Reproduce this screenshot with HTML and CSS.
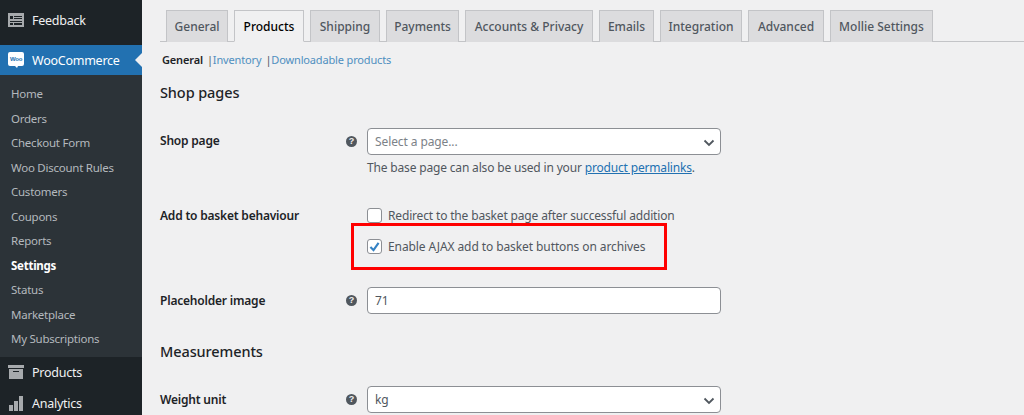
FILE: index.html
```html
<!DOCTYPE html>
<html lang="en">
<head>
<meta charset="utf-8">
<title>WooCommerce settings</title>
<link rel="stylesheet" href="styles.css">
</head>
<body>
<div class="page">
  <aside class="sidebar">
    <div class="menu-top feedback">
      <svg class="mi" viewBox="0 0 16 16"><path fill="#a7aaad" d="M0 1h16v14H0z"/><path fill="#1d2327" d="M2 4h3v3H2zM6 4h8v1H6zM6 6h8v1H6zM2 9h12v1H2zM2 11h3v2H2zM6 11h8v2H6z"/></svg>
      <span>Feedback</span>
    </div>
    <div class="menu-top woo">
      <svg class="mi" viewBox="0 0 16 16"><path fill="#fff" d="M2 0h12a2 2 0 0 1 2 2v10a2 2 0 0 1-2 2h-4l-1 2-2-2H2a2 2 0 0 1-2-2V2a2 2 0 0 1 2-2z"/><text x="8" y="9.4" class="woo-t">Woo</text></svg>
      <span>WooCommerce</span>
      <i class="arrow"></i>
    </div>
    <ul class="submenu">
      <li>Home</li><li>Orders</li><li>Checkout Form</li><li>Woo Discount Rules</li><li>Customers</li><li>Coupons</li><li>Reports</li><li class="cur">Settings</li><li>Status</li><li>Marketplace</li><li>My Subscriptions</li>
    </ul>
    <div class="menu-top products">
      <svg class="mi" viewBox="0 0 16 16"><path fill="#a7aaad" d="M0 1h16v3H0zM1 5h14v10H1z"/><path fill="#1d2327" d="M5 7h6v1H5z"/></svg>
      <span>Products</span>
    </div>
    <div class="menu-top analytics">
      <svg class="mi" viewBox="0 0 16 16"><path fill="#a7aaad" d="M1 10h4v6H1zM6 6h4v10H6zM11 1h4v15h-4z"/></svg>
      <span>Analytics</span>
    </div>
  </aside>
  <main class="main">
    <nav class="tabs">
      <a class="tab">General</a><a class="tab active">Products</a><a class="tab">Shipping</a><a class="tab">Payments</a><a class="tab">Accounts &amp; Privacy</a><a class="tab">Emails</a><a class="tab">Integration</a><a class="tab">Advanced</a><a class="tab">Mollie Settings</a>
    </nav>
    <div class="subnav"><b>General</b><span class="sep">|</span><a>Inventory</a><span class="sep">|</span><a>Downloadable products</a></div>
    <h2 class="h-shop">Shop pages</h2>
    <div class="row r-shop">
      <label class="lbl">Shop page</label>
      <span class="help">?</span>
      <div class="field">
        <div class="input select muted">Select a page...<svg class="chev" viewBox="0 0 12 8"><path d="M1.5 1.5 6 6l4.5-4.5" fill="none" stroke="#50575e" stroke-width="1.8"/></svg></div>
        <p class="desc">The base page can also be used in your <a>product permalinks</a>.</p>
      </div>
    </div>
    <div class="row r-basket">
      <label class="lbl">Add to basket behaviour</label>
      <span class="help none"></span>
      <div class="field">
        <div class="check"><span class="box"></span>Redirect to the basket page after successful addition</div>
        <div class="check second"><span class="box"><svg viewBox="0 0 16 16"><path d="M3 8.5 6.8 12.5 13 3.5" fill="none" stroke="#3582c4" stroke-width="2.6"/></svg></span>Enable AJAX add to basket buttons on archives</div>
        <div class="highlight"></div>
      </div>
    </div>
    <div class="row r-place">
      <label class="lbl">Placeholder image</label>
      <span class="help">?</span>
      <div class="field"><div class="input">71</div></div>
    </div>
    <h2 class="h-meas">Measurements</h2>
    <div class="row r-weight">
      <label class="lbl">Weight unit</label>
      <span class="help">?</span>
      <div class="field"><div class="input select">kg<svg class="chev" viewBox="0 0 12 8"><path d="M1.5 1.5 6 6l4.5-4.5" fill="none" stroke="#50575e" stroke-width="1.8"/></svg></div></div>
    </div>
  </main>
</div>
</body>
</html>
```
FILE: styles.css
```css
* { box-sizing: border-box; }
html, body { margin: 0; height: 415px; overflow: hidden; }
body { background: #f0f0f1; font-family: "Noto Sans", "Open Sans", sans-serif; font-size: 12px; letter-spacing: -0.2px; color: #3c434a; }
.page { display: flex; height: 415px; }
.sidebar { width: 142px; flex: none; background: #1d2327; height: 415px; overflow: hidden; }
.menu-top { display: flex; align-items: center; gap: 8px; padding-left: 8px; height: 30px; color: #f0f0f1; font-size: 12.5px; letter-spacing: -0.25px; position: relative; }
.mi { width: 16px; height: 16px; flex: none; }
.feedback { margin-top: 5px; margin-bottom: 10px; }
.woo { background: #2271b1; color: #fff; }
.woo-t { font: bold 6px "Liberation Sans", sans-serif; fill: #2271b1; text-anchor: middle; }
.arrow { position: absolute; right: 0; top: 8px; border: 7px solid transparent; border-right-color: #f0f0f1; border-left-width: 0; }
.submenu { list-style: none; margin: 0; padding: 7px 0 5px; background: #2c3338; }
.submenu li { height: 24.5px; line-height: 24px; padding-left: 11px; color: #b4b9be; font-size: 11.5px; letter-spacing: -0.25px; }
.submenu li.cur { color: #fff; font-weight: 700; }
.products { height: 31px; }
.analytics { height: 31px; }
.main { flex: 1; min-width: 0; padding-left: 18px; }
.tabs { display: grid; grid-template-columns: 62px 70px 70px 73px 128px 55px 82px 76px 103px; gap: 6px; height: 32px; margin-top: 10px; padding-left: 6px; border-bottom: 1px solid #c3c4c7; }
.tab { height: 32px; border: 1px solid #c3c4c7; border-bottom: 0; background: #dcdcde; color: #50575e; font-size: 12px; letter-spacing: 0; font-weight: 500; line-height: 31px; text-align: center; white-space: nowrap; }
.tab.active { background: #f0f0f1; color: #000; border-bottom: 1px solid #f0f0f1; }
.subnav { margin: 9px 0 0 2px; height: 17px; line-height: 17px; font-size: 11px; letter-spacing: -0.15px; white-space: nowrap; }
.subnav b { color: #1d2327; font-weight: 600; }
.subnav a { color: #4f8fc0; }
.sep { color: #50575e; margin: 0 0 0 4px; }
h2 { margin: 0; color: #1d2327; font-size: 14.5px; letter-spacing: -0.1px; font-weight: 500; line-height: 20px; }
.h-shop { margin-top: 14px; }
.row { display: flex; align-items: flex-start; }
.lbl { width: 185px; flex: none; color: #1d2327; font-weight: 600; font-size: 12px; letter-spacing: -0.2px; line-height: 18px; }
.help { width: 11px; height: 11px; flex: none; margin: 0 10px 0 1px; border-radius: 50%; background: #50575e; color: #f0f0f1; font: bold 9px/11px "Liberation Sans", sans-serif; text-align: center; letter-spacing: 0; }
.help.none { background: none; }
.field { width: 354px; flex: none; position: relative; }
.input { height: 27px; padding: 0 7px; background: #fff; border: 1px solid #8c8f94; border-radius: 4px; line-height: 26px; font-size: 12px; letter-spacing: -0.1px; color: #50575e; position: relative; }
.muted { color: #7c8288; }
.chev { position: absolute; right: 5px; top: 10px; width: 12px; height: 8px; }
.desc { margin: 4px 0 0; line-height: 17px; color: #50575e; white-space: nowrap; letter-spacing: -0.17px; }
.desc a { color: #2271b1; text-decoration: underline; }
.r-shop { margin-top: 26px; }
.r-shop .lbl { padding-top: 4px; }
.r-shop .help, .r-place .help, .r-weight .help { margin-top: 8px; }
.r-basket { margin-top: 31px; }
.check { display: flex; align-items: center; gap: 6px; height: 17px; white-space: nowrap; color: #50575e; letter-spacing: -0.16px; }
.second { margin-top: 14px; letter-spacing: -0.09px; }
.box { width: 15px; height: 15px; flex: none; background: #fff; border: 1px solid #8c8f94; border-radius: 3px; display: block; }
.box svg { display: block; width: 13px; height: 13px; }
.highlight { position: absolute; left: -16px; top: 16px; width: 316px; height: 47px; border: 3px solid #f00; }
.r-place { margin-top: 32px; }
.r-place .lbl, .r-weight .lbl { padding-top: 5px; }
.h-meas { margin-top: 27px; }
.r-weight { margin-top: 25px; }
```
